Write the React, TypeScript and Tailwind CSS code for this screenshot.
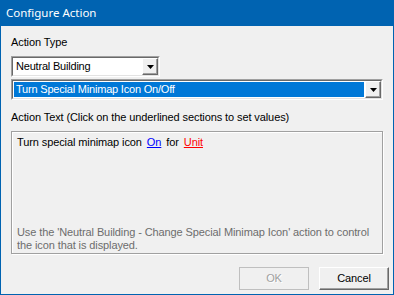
import React from "react";

const ui = { fontFamily: '"Liberation Sans", Arial, sans-serif' };
const titleFont = { fontFamily: '"Noto Sans", "Open Sans", sans-serif' };

function DropArrow() {
  return (
    <div className="flex h-full w-[16px] items-center justify-center border-t border-l border-t-white border-l-white border-b border-r border-b-[#696969] border-r-[#696969] bg-[#f0f0f0] shadow-[inset_-1px_-1px_0_#a0a0a0]">
      <svg width="7" height="4" viewBox="0 0 7 4">
        <path d="M0 0h7L3.5 4z" fill="#000" />
      </svg>
    </div>
  );
}

function Select({ text, selected, width }: { text: string; selected?: boolean; width: string }) {
  return (
    <div className={`${width} h-[21px] border-t border-l border-t-[#a0a0a0] border-l-[#a0a0a0] border-b border-r border-b-white border-r-white`}>
      <div className="flex h-full border-t border-l border-t-[#696969] border-l-[#696969] border-b border-r border-b-[#e3e3e3] border-r-[#e3e3e3] bg-white">
        <div className="flex flex-1 p-[1px]">
          <div
            className={`flex flex-1 items-center pl-[2px] text-[11px] tracking-[-0.2px] ${
              selected ? "bg-[#0078d7] text-white" : "text-black"
            }`}
          >
            {text}
          </div>
        </div>
        <DropArrow />
      </div>
    </div>
  );
}

function Button({ label, disabled }: { label: string; disabled?: boolean }) {
  return (
    <div
      className={`flex h-[23px] w-[70px] items-center justify-center text-[11px] ${
        disabled
          ? "border border-[#bfbfbf] text-[#a0a0a0] [text-shadow:1px_1px_0_#fff]"
          : "border border-t-white border-l-white border-b-[#696969] border-r-[#696969] text-black shadow-[inset_-1px_-1px_0_#a0a0a0]"
      } bg-[#f0f0f0]`}
    >
      {label}
    </div>
  );
}

export default function App() {
  return (
    <div className="flex h-[295px] w-[394px] flex-col bg-[#0063b1] px-[1px] pb-[1px]" style={ui}>
      <div className="flex h-[26px] items-center pl-[5px] text-[11.5px] text-white" style={titleFont}>
        Configure Action
      </div>
      <div className="flex flex-1 flex-col bg-[#f0f0f0] px-[10px] pt-[10px] text-[11px] tracking-[-0.1px] text-black">
        <div className="h-[13px] leading-[13px]">Action Type</div>
        <div className="mt-[7px]">
          <Select text="Neutral Building" width="w-[149px]" />
        </div>
        <div className="mt-[2px]">
          <Select text="Turn Special Minimap Icon On/Off" selected width="w-[372px]" />
        </div>
        <div className="mt-[11px] h-[13px] leading-[13px]">Action Text (Click on the underlined sections to set values)</div>
        <div className="mt-[7px] flex h-[123px] w-[372px] flex-col border border-[#a0a0a0] shadow-[1px_1px_0_#fff,inset_1px_1px_0_#fff] px-[5px] pt-[4px] pb-[1px]">
          <div className="leading-[13px]">
            Turn special minimap icon{" "}
            <span className="mx-[2px] text-[#0000ff] underline">On</span> for{" "}
            <span className="ml-[2px] text-[#ff0000] underline">Unit</span>
          </div>
          <div className="mt-auto leading-[13px] text-[#6d6d6d]">
            Use the 'Neutral Building - Change Special Minimap Icon' action to control
            <br />
            the icon that is displayed.
          </div>
        </div>
        <div className="mt-[13px] -mr-[6px] flex justify-end gap-[10px]">
          <Button label="OK" disabled />
          <Button label="Cancel" />
        </div>
      </div>
    </div>
  );
}
